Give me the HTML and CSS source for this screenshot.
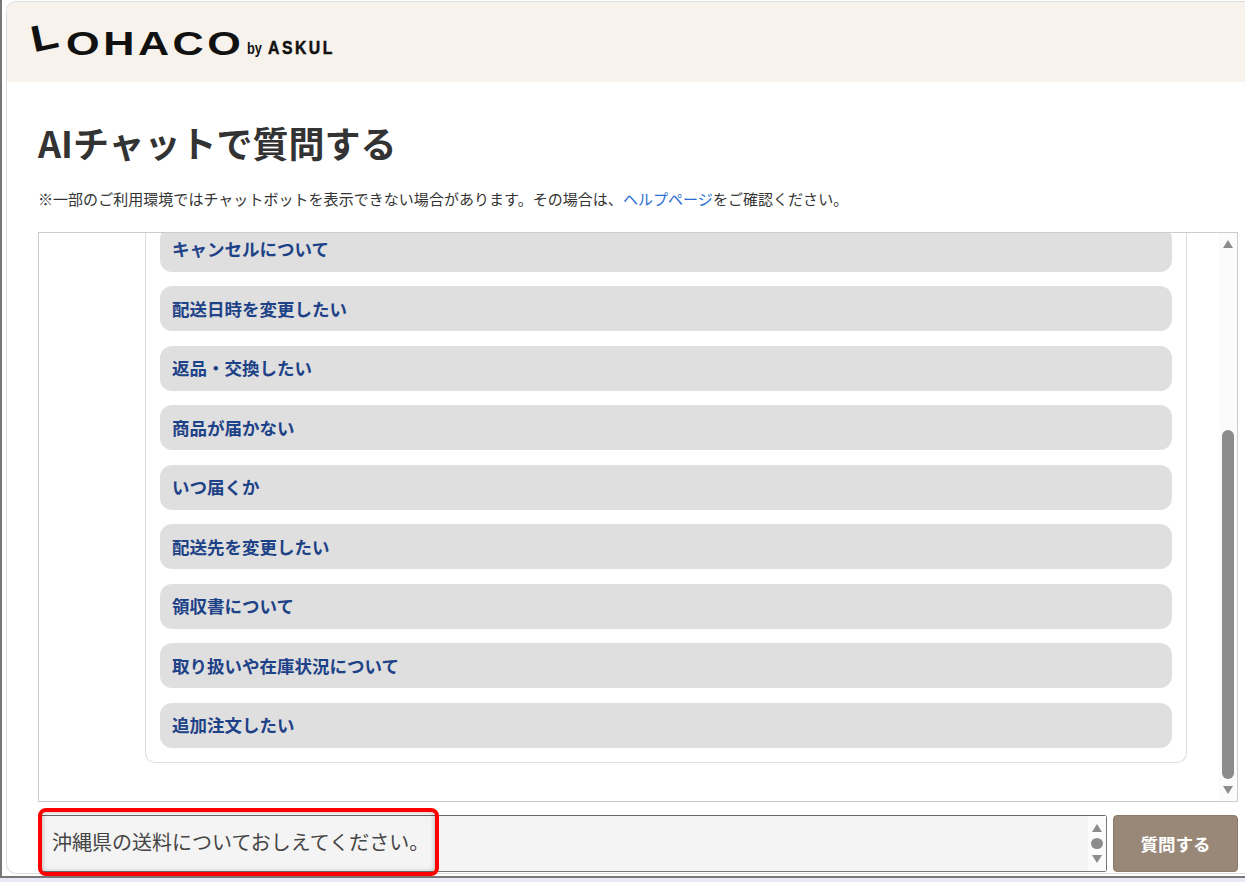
FILE: index.html
```html
<!DOCTYPE html>
<html lang="ja">
<head>
  <meta charset="UTF-8" />
  <title>AIチャットで質問する - LOHACO</title>
  <meta name="viewport" content="width=device-width, initial-scale=1.0" />
  <link rel="stylesheet" href="styles.css">
</head>
<body>

  <div class="window">
    <div class="card">
      <header class="site-header">
        <div class="logo">
          <span class="logo-l">L</span>
          <span class="logo-name">OHACO</span>
          <span class="logo-by">by</span>
          <span class="logo-askul">ASKUL</span>
        </div>
      </header>

      <main class="content">
        <h1>AIチャットで質問する</h1>
        <p class="note">※一部のご利用環境ではチャットボットを表示できない場合があります。その場合は、<a href="#">ヘルプページ</a>をご確認ください。</p>

        <div class="chat-box">
          <div class="chat-scroll">
            <div class="choices">
              <button type="button">キャンセルについて</button>
              <button type="button">配送日時を変更したい</button>
              <button type="button">返品・交換したい</button>
              <button type="button">商品が届かない</button>
              <button type="button">いつ届くか</button>
              <button type="button">配送先を変更したい</button>
              <button type="button">領収書について</button>
              <button type="button">取り扱いや在庫状況について</button>
              <button type="button">追加注文したい</button>
            </div>
          </div>
          <div class="scrollbar">
            <span class="arrow-up"></span>
            <div class="scroll-track"><div class="scroll-thumb"></div></div>
            <span class="arrow-down"></span>
          </div>
        </div>

        <form class="ask-form">
          <div class="ask-input">
            <div class="ask-text">沖縄県の送料についておしえてください。</div>
            <div class="ask-scroll">
              <span class="arrow-up"></span>
              <span class="dot"></span>
              <span class="arrow-down"></span>
            </div>
            <div class="highlight"></div>
          </div>
          <button type="button" class="ask-btn">質問する</button>
        </form>
      </main>
    </div>
  </div>

</body>
</html>
```

FILE: styles.css
```css
* {
  box-sizing: border-box;
  margin: 0;
  padding: 0;
}

html, body {
  height: 882px;
  overflow: hidden;
  background: #e9e9f8;
  font-family: "Noto Sans CJK JP", "Noto Sans", sans-serif;
  color: #333;
}

.window {
  width: 1245px;
  height: 878px;
  background: #fff;
  border-left: 2px solid #777;
  border-bottom: 2px solid #777;
  padding: 1px 0 2px 4px;
}

.card {
  height: 100%;
  border: 1px solid #ddd;
  border-right: none;
  border-radius: 10px 0 0 10px;
}

.site-header {
  height: 80px;
  background: #f7f3ec;
  border-top-left-radius: 10px;
  display: flex;
  align-items: center;
  padding-left: 25px;
}

.logo {
  display: flex;
  align-items: flex-end;
  height: 40px;
  color: #111;
  font-family: "Liberation Sans", sans-serif;
  line-height: 1;
  white-space: nowrap;
}

.logo-l {
  font-size: 37px;
  font-weight: bold;
  width: 26px;
  transform-origin: left bottom;
  transform: rotate(-12deg) scaleX(1.2);
  margin: 0 0 4px 3px;
}

.logo-name {
  font-size: 34px;
  letter-spacing: 2.8px;
  font-weight: bold;
  width: 179px;
  margin: 0 0 2px 5px;
  transform-origin: left bottom;
  transform: scaleX(1.27);
}

.logo-by {
  font-size: 16px;
  font-weight: bold;
  width: 15px;
  margin: 0 0 5px 2px;
  transform-origin: left bottom;
  transform: scaleX(0.8);
}

.logo-askul {
  font-size: 19px;
  font-weight: bold;
  letter-spacing: 3px;
  margin: 0 0 5px 6px;
  transform-origin: left bottom;
  transform: scaleX(0.83);
  -webkit-text-stroke: 0.5px #111;
}

.content {
  padding: 37px 0 0 31px;
}

h1 {
  font-size: 36px;
  line-height: 46px;
  font-weight: bold;
  color: #333;
}

.note {
  margin-top: 24px;
  font-size: 15px;
  line-height: 20px;
  letter-spacing: 0.04px;
}

.note a {
  color: #2a6fd0;
  text-decoration: none;
}

.chat-box {
  display: flex;
  width: 1200px;
  height: 570px;
  margin-top: 23px;
  border: 1px solid #ccc;
  overflow: hidden;
}

.chat-scroll {
  flex: 1;
  overflow: hidden;
  padding-left: 106px;
}

.choices {
  width: 1042px;
  margin-top: -6.5px;
  padding: 0 14px 14px;
  border: 1px solid #ddd;
  border-top: none;
  border-radius: 0 0 10px 10px;
}

.choices button {
  display: block;
  width: 100%;
  height: 45px;
  margin-bottom: 14.5px;
  padding: 0 0 1px 12px;
  background: #dfdfdf;
  border: none;
  border-radius: 12px;
  color: #1e4287;
  font-family: inherit;
  font-size: 17.5px;
  font-weight: bold;
  text-align: left;
}

.choices button:last-child {
  margin-bottom: 0;
}

.scrollbar {
  width: 18px;
  background: #fbfbfb;
  display: flex;
  flex-direction: column;
  align-items: center;
  padding: 7px 1px 7px 0;
}

.scroll-track {
  flex: 1;
  display: flex;
  align-items: flex-end;
  padding-bottom: 7px;
}

.scroll-thumb {
  width: 12px;
  height: 349px;
  background: #8c8c8c;
  border-radius: 6px;
}

.arrow-up,
.arrow-down {
  display: block;
  width: 0;
  height: 0;
  border-left: 5px solid transparent;
  border-right: 5px solid transparent;
}

.arrow-up {
  border-bottom: 8px solid #8c8c8c;
}

.arrow-down {
  border-top: 8px solid #8c8c8c;
}

.ask-form {
  display: flex;
  gap: 6px;
  width: 1200px;
  margin-top: 13px;
}

.ask-input {
  position: relative;
  display: flex;
  width: 1069px;
  height: 57px;
  background: #f4f4f4;
  border: 1px solid #777;
  border-color: #666 #777 #777 #bbb;
  border-radius: 3px;
}

.ask-text {
  flex: 1;
  padding-left: 13px;
  font-size: 20px;
  line-height: 52px;
  color: #444;
}

.ask-scroll {
  width: 18px;
  background: #fbfbfb;
  display: flex;
  flex-direction: column;
  align-items: center;
  justify-content: center;
  gap: 6px;
}

.ask-scroll .dot {
  width: 12px;
  height: 11px;
  background: #8c8c8c;
  border-radius: 50%;
}

.highlight {
  position: absolute;
  left: -1px;
  top: -8px;
  width: 401px;
  height: 68px;
  border: 4px solid #f00;
  border-radius: 8px;
  box-shadow: inset 0 0 5px rgba(0, 0, 0, 0.3);
}

.ask-btn {
  width: 125px;
  height: 57px;
  background: #998877;
  border: 1px solid #8f7c68;
  border-radius: 4px;
  color: #fff;
  font-family: inherit;
  font-size: 17.5px;
  font-weight: bold;
}
```
